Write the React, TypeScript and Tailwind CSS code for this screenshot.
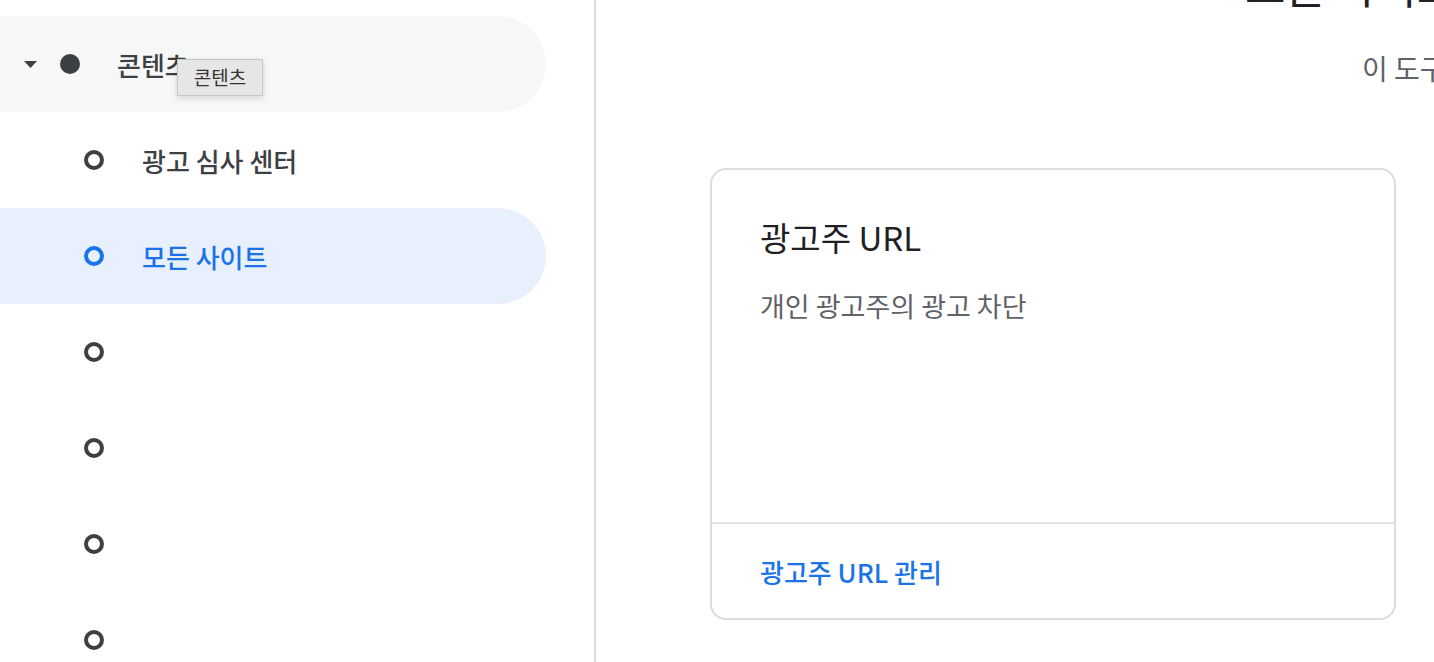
import React from "react";

const FONT = "font-['Noto_Sans_CJK_KR','Noto_Sans',sans-serif]";

function Caret() {
  return (
    <svg width="13" height="7" viewBox="0 0 13 7" className="shrink-0">
      <path d="M0 0h13L6.5 7z" fill="#3c4043" />
    </svg>
  );
}

function Ring({ active }: { active?: boolean }) {
  return (
    <span
      className={
        active
          ? "h-5 w-5 shrink-0 rounded-full border-4 border-[#1a73e8]"
          : "h-5 w-5 shrink-0 rounded-full border-4 border-[#3c4043]"
      }
    />
  );
}

const subItems: { label: string; active?: boolean }[] = [
  { label: "광고 심사 센터" },
  { label: "모든 사이트", active: true },
  { label: "" },
  { label: "" },
  { label: "" },
  { label: "" },
];

export default function App() {
  return (
    <div className={`flex h-[662px] w-[1434px] overflow-hidden bg-white ${FONT}`}>
      {/* Side navigation */}
      <aside className="w-[596px] shrink-0 border-r-2 border-[#dadce0] pt-4 pr-12">
        <div className="relative flex h-24 items-center rounded-r-full bg-[#f6f7f7] pl-6">
          <Caret />
          <span className="ml-[23px] h-5 w-5 shrink-0 rounded-full bg-[#3c4043]" />
          <span className="ml-[37px] text-[26px] font-medium text-[#3c4043]">콘텐츠</span>
          {/* hover tooltip */}
          <div className="absolute left-[177px] top-[43px] flex h-[37px] w-[86px] items-center justify-center border border-[#c6c6c6] bg-[#e6e6e6] text-[19px] text-[#333] shadow-[0_2px_6px_rgba(0,0,0,0.15)]">
            콘텐츠
          </div>
        </div>
        {subItems.map((item, i) => (
          <div
            key={i}
            className={
              item.active
                ? "flex h-24 items-center rounded-r-full bg-[#e8f0fe] pl-[84px]"
                : "flex h-24 items-center rounded-r-full pl-[84px]"
            }
          >
            <Ring active={item.active} />
            <span
              className={
                item.active
                  ? "ml-[38px] text-[26px] font-medium text-[#1a73e8]"
                  : "ml-[38px] text-[26px] font-medium text-[#3c4043]"
              }
            >
              {item.label}
            </span>
          </div>
        ))}
      </aside>

      {/* Main content */}
      <main className="min-w-0 flex-1 overflow-hidden pl-[114px]">
        <h1 className="-mt-[43px] ml-[535px] whitespace-nowrap text-[44px] leading-[56px] font-normal text-[#202124]">
          모든 사이트
        </h1>
        <p className="mt-[37px] ml-[652px] whitespace-nowrap text-[28px] leading-9 text-[#5f6368]">
          이 도구를 사용하면 광고를 차단할 수 있습니다.
        </p>

        <div className="mt-[82px] flex h-[452px] w-[686px] flex-col rounded-2xl border-2 border-[#dadce0]">
          <div className="flex-1 px-12 pt-[47px]">
            <h2 className="text-[33px] leading-10 font-normal text-[#202124]">광고주 URL</h2>
            <p className="mt-[33px] text-[27px] leading-8 text-[#5f6368]">개인 광고주의 광고 차단</p>
          </div>
          <div className="flex h-24 items-center border-t-2 border-[#e3e3e6] px-12">
            <span className="text-[26px] font-medium text-[#1a73e8]">광고주 URL 관리</span>
          </div>
        </div>
      </main>
    </div>
  );
}
